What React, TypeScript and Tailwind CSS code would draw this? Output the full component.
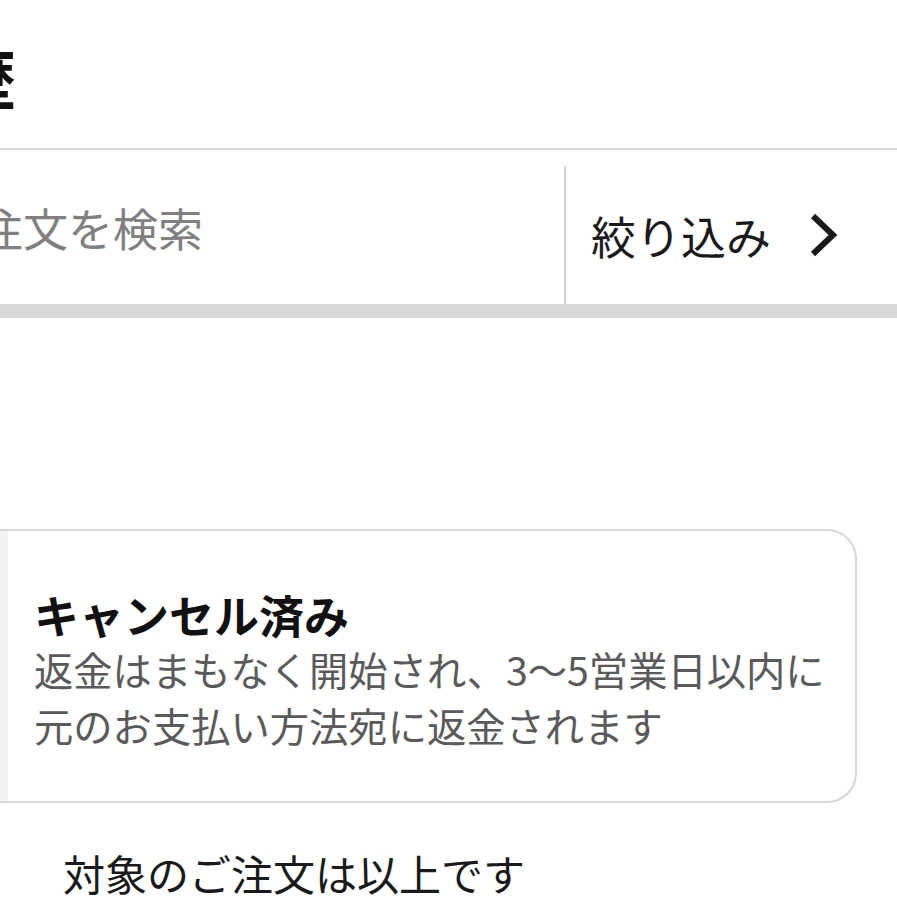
function Chevron() {
  return (
    <svg width="30" height="46" viewBox="0 0 30 46" fill="none" className="shrink-0">
      <polyline points="4,4 24,23 4,42" stroke="#1a1a1a" strokeWidth="6" strokeLinejoin="miter" strokeLinecap="butt" />
    </svg>
  );
}

export default function App() {
  return (
    <div className="w-[897px] h-[920px] overflow-hidden bg-white font-['Noto_Sans_CJK_JP',sans-serif] text-[#1a1a1a]">
      <div className="h-[148px] flex items-center pt-[4px]">
        <h1 className="ml-[-240px] text-[64px] font-bold leading-none whitespace-nowrap text-[#111]">注文履歴</h1>
      </div>

      <div className="h-[156px] flex border-t-2 border-[#d6d6d6]">
        <div className="w-[564px] flex items-center overflow-hidden">
          <span className="ml-[-22px] text-[45px] leading-none whitespace-nowrap text-[#808080]">注文を検索</span>
        </div>
        <div className="w-[2px] mt-[16px] bg-[#d3d3d3]" />
        <div className="flex-1 flex items-center pt-[16px] pl-[25px]">
          <span className="text-[45px] leading-none whitespace-nowrap">絞り込み</span>
          <div className="ml-[38px]">
            <Chevron />
          </div>
        </div>
      </div>
      <div className="h-[14px] bg-[#d6d7d9]" />

      <div className="mt-[211px] ml-[-30px] w-[887px] h-[274px] flex rounded-[30px] border-2 border-[#d8d8d8] overflow-hidden">
        <div className="w-[36px] bg-[#f2f2f2]" />
        <div className="pl-[26px] pt-[58px]">
          <div className="text-[45px] font-bold leading-[52px] whitespace-nowrap text-[#111]">キャンセル済み</div>
          <div className="text-[39.3px] leading-[56px] text-[#5a5a5a] whitespace-nowrap">
            <div>返金はまもなく開始され、3〜5営業日以内に</div>
            <div>元のお支払い方法宛に返金されます</div>
          </div>
        </div>
      </div>

      <div className="mt-[45px] ml-[63px] text-[42px] leading-[50px] whitespace-nowrap">対象のご注文は以上です</div>
    </div>
  );
}
